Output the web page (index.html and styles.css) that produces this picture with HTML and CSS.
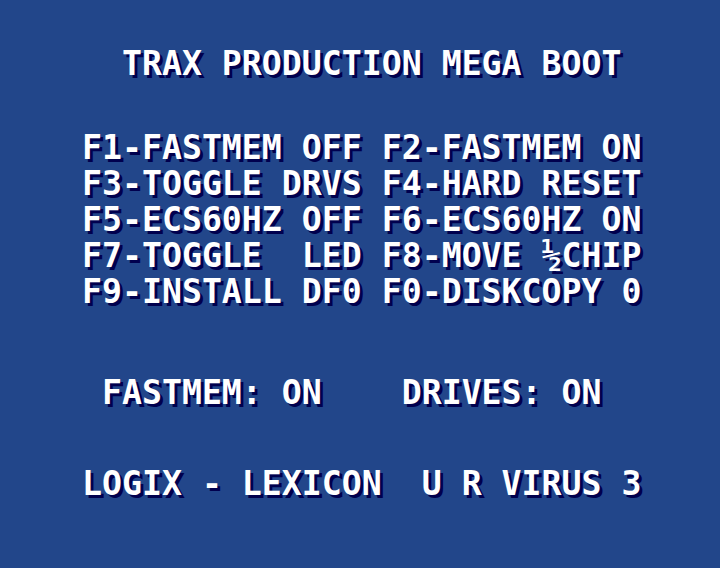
FILE: index.html
```html
<!DOCTYPE html>
<html>
<head>
<meta charset="utf-8">
<link rel="stylesheet" href="styles.css">
</head>
<body>
<main class="screen">
<div class="line title">  TRAX PRODUCTION MEGA BOOT</div>
<div class="menu">
<div class="line">F1-FASTMEM OFF F2-FASTMEM ON</div>
<div class="line">F3-TOGGLE DRVS F4-HARD RESET</div>
<div class="line">F5-ECS60HZ OFF F6-ECS60HZ ON</div>
<div class="line">F7-TOGGLE  LED F8-MOVE ½CHIP</div>
<div class="line">F9-INSTALL DF0 F0-DISKCOPY 0</div>
</div>
<div class="line status"> FASTMEM: ON    DRIVES: ON</div>
<div class="line footer">LOGIX - LEXICON  U R VIRUS 3</div>
</main>
</body>
</html>
```
FILE: styles.css
```css
html, body {
  margin: 0;
  padding: 0;
  background: #22468a;
}
.screen {
  width: 720px;
  height: 568px;
  box-sizing: border-box;
  padding: 46px 0 0 82px;
  background: #22468a;
  color: #ffffff;
  font-family: "DejaVu Sans Mono", "Liberation Mono", monospace;
  font-weight: bold;
  font-size: 33.2px;
  overflow: hidden;
}
.line {
  height: 36px;
  line-height: 36px;
  white-space: pre;
  text-shadow: 3px 3px 0 #00004e;
}
.menu {
  margin-top: 48px;
}
.status {
  margin-top: 65px;
}
.footer {
  margin-top: 55px;
}
```
